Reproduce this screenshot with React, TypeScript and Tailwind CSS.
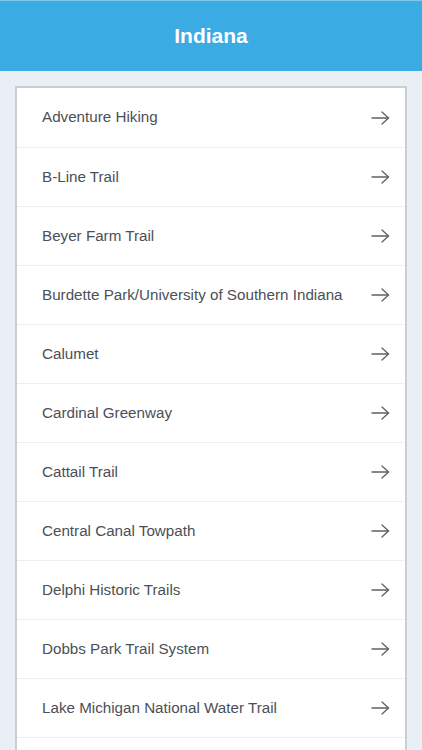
import React from 'react';

const trails = [
	'Adventure Hiking',
	'B-Line Trail',
	'Beyer Farm Trail',
	'Burdette Park/University of Southern Indiana',
	'Calumet',
	'Cardinal Greenway',
	'Cattail Trail',
	'Central Canal Towpath',
	'Delphi Historic Trails',
	'Dobbs Park Trail System',
	'Lake Michigan National Water Trail',
];

function Arrow() {
	return (
		<svg width="19" height="14" viewBox="0 0 19 14" fill="none" stroke="#5c6169" strokeWidth="1.3" strokeLinecap="round" strokeLinejoin="round">
			<path d="M1 7h16.5" />
			<path d="M11 1l6.5 6-6.5 6" />
		</svg>
	);
}

export default function App() {
	return (
		<div className="w-[422px] h-[750px] overflow-hidden bg-[#eaeef5]" style={{ fontFamily: '"Liberation Sans", Arial, sans-serif' }}>
			{/* HEADER */}
			<div className="h-[71px] bg-[#3babe3] border-t border-[#7cc8ee] flex items-center justify-center">
				<h1 className="text-white text-[21px] font-bold -mt-[1px]">Indiana</h1>
			</div>

			{/* LIST */}
			<div className="px-[15px] pt-[15px]">
				<div className="bg-white border-2 border-b-0 border-[#c9cdd4]">
					{trails.map((t, i) => (
						<div
							key={t}
							className={`h-[59px] flex items-center justify-between pl-[25px] pr-[15px] ${i > 0 ? 'border-t border-[#eceef1]' : ''}`}
						>
							<span className="text-[15.2px] text-[#4b5058]">{t}</span>
							<Arrow />
						</div>
					))}
					<div className="h-[40px] border-t border-[#eceef1]" />
				</div>
			</div>
		</div>
	);
}
